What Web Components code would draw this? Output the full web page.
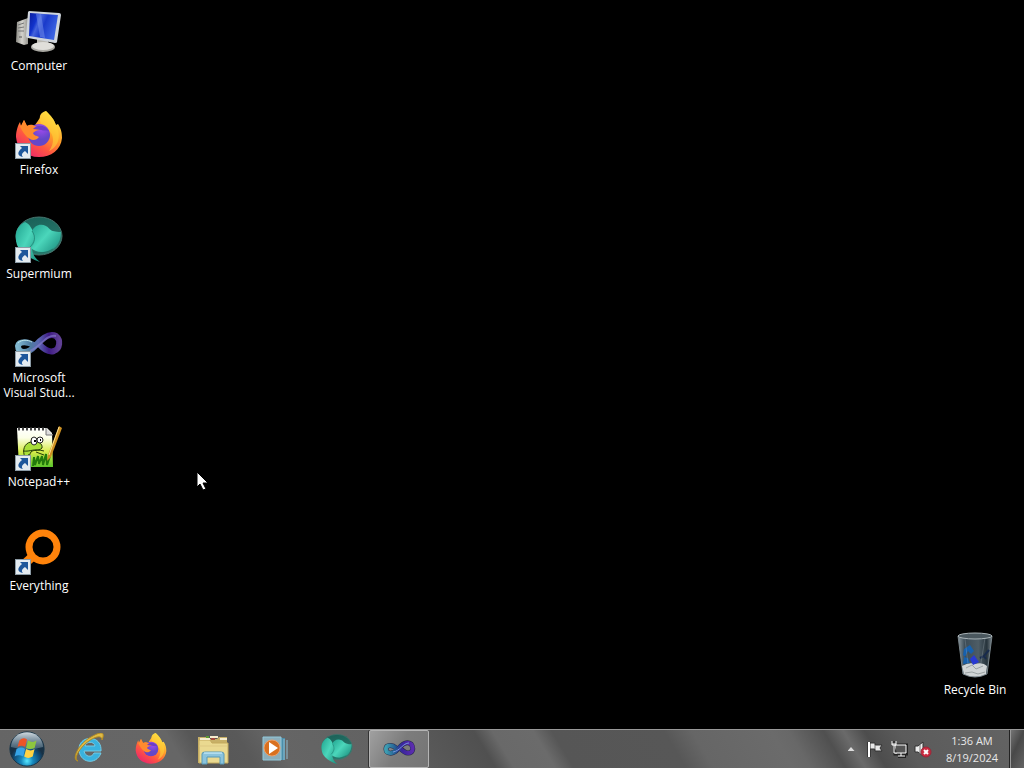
<!DOCTYPE html>
<html lang="en">
<head>
<meta charset="utf-8">
<title>Desktop</title>
<style>
html, body { height: 100%; margin: 0; background: #000; overflow: hidden; }
body { font: 12px/15px "Open Sans", "Noto Sans", sans-serif; color: #fff; }
</style>
</head>
<body>
<win-desktop></win-desktop>
<script>
const art = {
computer: `<svg viewBox="0 0 48 48"><defs><linearGradient id="s" x2="1" y2=".4"><stop stop-color="#0a1c9c"/><stop offset=".3" stop-color="#1233cc"/><stop offset=".4" stop-color="#4463dc"/><stop offset=".6" stop-color="#1a3aca"/><stop offset="1" stop-color="#3b63e2"/></linearGradient><linearGradient id="t" x2="1"><stop stop-color="#8b8a84"/><stop offset=".5" stop-color="#d5d4ce"/><stop offset="1" stop-color="#96958f"/></linearGradient></defs>
<path d="M2 15 13 11v26l-4 1-8-3z" fill="url(#t)"/><path d="M3 18l6-2M3 21l6-1M3 24h6" stroke="#777" /><path d="M4 30h3" stroke="#555"/><path d="M22 29l11 2v8H22z" fill="#bbb9b2"/><ellipse cx="28" cy="40" rx="12" ry="5" fill="#a9a8a2"/><ellipse cx="28" cy="39" rx="11" ry="4" fill="#e0dfda"/><path d="M14 4l30 2q2 0 2 2l-4 27q0 1-2 1L13 31q-2 0-2-2l2-24z" fill="#cfd5dc"/><path d="M15 6l28 2-4 25-25-4z" fill="url(#s)"/><path d="M21 7l5 0 4 24-5-1z" fill="#7995ee" opacity=".5"/></svg>`,
firefox: `<svg viewBox="0 0 48 48"><defs><linearGradient id="f" x1=".8" y1=".1" x2=".25" y2=".9"><stop stop-color="#ffe848"/><stop offset=".4" stop-color="#ff9c29"/><stop offset=".7" stop-color="#ff5940"/><stop offset="1" stop-color="#ef2f63"/></linearGradient><radialGradient id="p" cx=".6" cy=".2"><stop stop-color="#a34af0"/><stop offset="1" stop-color="#6347c8"/></radialGradient></defs>
<path d="M31 0c5 5 8 8 10 14l2-1c3 5 4 8 4 14C46 39 36 46 24 46 11 46 2 38 1 26 1 20 3 14 5 11l1 4 3-6 3 6c3-2 6-1 8 0 1-4 5-6 5-10 1-3 3-4 6-5z" fill="url(#f)"/><path d="M25 7c3-5 5-7 6-7 5 5 8 8 10 14 6 12 2 22-7 26 6-8 5-17-1-21-4-3-9-7-8-12z" fill="#ffd238" opacity=".6"/><circle cx="24" cy="24" r="11" fill="url(#p)"/><path d="M4 13l2 2 3-6 3 6c5-2 10 0 13 4-3 0-5 1-7 3 1 3 3 2 6 4-2 3-6 4-9 2-5-3-8-8-11-15z" fill="#ff8b2d"/><path d="M18 18c5-5 12-4 16 2-4-1-5 0-8-1z" fill="#6b3fc5"/></svg>`,
supermium: `<svg viewBox="0 0 48 48"><defs><linearGradient id="m" x2=".3" y2="1"><stop stop-color="#175f56"/><stop offset="1" stop-color="#2d7c6f"/></linearGradient><linearGradient id="l" x2="1" y2=".8"><stop stop-color="#1fa28e"/><stop offset=".5" stop-color="#4bd6bb"/><stop offset="1" stop-color="#1f9483"/></linearGradient></defs>
<ellipse cx="24" cy="21" rx="23" ry="19" fill="url(#m)" stroke="#46756e"/><path d="M10 7C1 11-1 21 2 30c3 7 11 13 23 17-6-5-8-9-8-14 4-4 5-8 2-14-2-5-4-10-9-12z" fill="url(#l)"/><path d="M17 16c2-5 8-8 14-5 4 2 3 6 15 6 0 12-7 20-19 20-5 0-9-2-11-4 5-5 5-11 1-17z" fill="url(#l)"/><path d="M17 16c4 6 3 11-2 16M18 37q10 3 20-3" fill="none" stroke="#176f62" opacity=".6"/></svg>`,
studio: `<svg viewBox="0 0 48 48"><defs><linearGradient id="v" x2="1"><stop stop-color="#80b7cf"/><stop offset=".3" stop-color="#4d7b9f"/><stop offset=".5" stop-color="#5c68b2"/><stop offset=".75" stop-color="#3e1a85"/><stop offset="1" stop-color="#604095"/></linearGradient></defs>
<path d="M19 27c-5-5-15-5-16 0 0 8 10 8 17 0 8-9 15-13 21-10 5 4 4 13-2 15-7 2-12-4-16-8" fill="none" stroke="url(#v)" stroke-width="6"/><path d="M3 24c4-4 10-3 14-1" fill="none" stroke="#bce3e8"/><path d="M15 32c11-4 16-17 26-15" fill="none" stroke="#8b80cf" stroke-width="2" opacity=".6"/></svg>`,
taskstudio: `<svg viewBox="0 0 34 32"><defs><linearGradient id="v" x2="1"><stop stop-color="#3f9fb2"/><stop offset=".35" stop-color="#245c93"/><stop offset=".6" stop-color="#39259d"/><stop offset="1" stop-color="#5b2cae"/></linearGradient></defs>
<path d="M14 15c-4-4-10-3-10 1 0 5 7 6 12 0 5-6 9-8 13-5 3 4 2 9-3 9-4 0-7-4-9-6" fill="none" stroke="#242846" stroke-width="5"/><path d="M14 15c-4-4-10-3-10 1 0 5 7 6 12 0 5-6 9-8 13-5 3 4 2 9-3 9-4 0-7-4-9-6" fill="none" stroke="url(#v)" stroke-width="4"/><path d="M11 19c7-1 10-9 16-9" fill="none" stroke="#7795dd"/></svg>`,
notepad: `<svg viewBox="0 0 48 48"><defs><linearGradient id="n" x2="0" y2="1"><stop stop-color="#fff"/><stop offset=".25" stop-color="#fcffe9"/><stop offset=".6" stop-color="#d8ed4c"/><stop offset="1" stop-color="#5bc52b"/></linearGradient></defs>
<path d="M2 5h30l5 5 1 34H4z" fill="url(#n)"/><path d="M3 6h28" stroke="#444" stroke-width="3" stroke-dasharray="2 2"/><path d="M31 5v7h7" fill="#ddd" stroke="#777"/><path d="M10 34c-3-6-1-14 6-15 7-2 12 2 11 6-4 4-8 1-11 4-2 3-1 5-5 6M8 28c8 1 10-3 21 0M14 31l-3 8M21 29l8 3" fill="#a9df39" stroke="#263b08"/><ellipse cx="19" cy="18" rx="3" ry="4" fill="#fff" stroke="#222"/><ellipse cx="25" cy="17" rx="3" ry="3" fill="#fff" stroke="#222"/><path d="M19 18h2M25 17h1" stroke="#000" stroke-width="2"/><path d="M18 43l1-9 1 8 3-9 1 8 3-8 1 9 3-11 1 11 3-9" fill="none" stroke="#227a0b" stroke-width="2"/><path d="M44 3l3 2-11 29-4 4 1-6z" fill="#ce9122"/><path d="M44 4L34 32" stroke="#ffe392"/></svg>`,
search: `<svg viewBox="0 0 48 48"><circle cx="28" cy="20" r="14" fill="none" stroke="#ff830b" stroke-width="7"/><path d="M17 30L5 41" stroke="#ff830b" stroke-width="9"/></svg>`,
bin: `<svg viewBox="0 0 48 48"><defs><linearGradient id="b" x2="1"><stop stop-color="#8c989e"/><stop offset=".2" stop-color="#3b4b56"/><stop offset=".6" stop-color="#4e5d66"/><stop offset=".85" stop-color="#27343c"/><stop offset="1" stop-color="#7c878d"/></linearGradient></defs>
<path d="M7 5q17-4 34 0l-5 38q-12 6-24 0z" fill="url(#b)" stroke="#78848a"/><ellipse cx="24" cy="5" rx="17" ry="3" fill="#4b585f" stroke="#a9b3b7"/><path d="M11 35q7-4 13-2 8-2 12 2l-1 8q-11 5-22 0z" fill="#d0d4d5"/><path d="M15 37l6-3 4 4 7-3M14 42l7-1 6 2 7-2" stroke="#9ba2a3" fill="none"/><path d="M13 18l6-4 4 6-3 3-3-3-3 6-2-2zM13 26l4 1 2 5-7 1z" fill="#1660ad"/><path d="M19 28l4-4 5 7-6 3z" fill="#293ad2"/><path d="M29 27l4-2 5-6M33 25l2 3" fill="none" stroke="#182b4c" stroke-width="2"/><path d="M14 8l3 25M34 7l-5 31" stroke="#b6c2c9" opacity=".25"/></svg>`,
start: `<svg viewBox="0 0 40 40"><defs><radialGradient id="o" cy=".85"><stop stop-color="#58e8ff"/><stop offset=".35" stop-color="#1688bd"/><stop offset=".75" stop-color="#114e79"/><stop offset="1" stop-color="#173044"/></radialGradient><linearGradient id="g" x2="0" y2="1"><stop stop-color="#d1dae0"/><stop offset="1" stop-color="#668497" stop-opacity=".5"/></linearGradient></defs>
<circle cx="20" cy="20" r="18" fill="url(#o)" stroke="#153448"/><path d="M3 18C4-3 36-3 37 18q-17 5-34 0z" fill="url(#g)"/><path d="M12 11q4-4 8-1l-2 8q-4-3-8 0z" fill="#ed5427"/><path d="M21 11q5 3 9 0l-2 8q-5 2-9 0z" fill="#8dc63f"/><path d="M9 20q5-3 9 0l-2 8q-5-3-9 0z" fill="#36a4e7"/><path d="M19 20q5 3 9 0l-2 8q-5 3-9 0z" fill="#ffd343"/></svg>`,
ie: `<svg viewBox="0 0 32 32"><path d="M28 18H11c1 6 8 7 10 2h7c-5 13-22 10-22-4C6 2 29 1 28 18zM12 13h10c-1-5-9-5-10 0z" fill="#39b2df" stroke="#75cce6"/><path d="M5 28C-2 27 5 11 18 4c12-7 14-4 11 3 0-6-9-3-17 4C4 19 1 26 5 28z" fill="#dfbb46" stroke="#b38b22"/></svg>`,
folder: `<svg viewBox="0 0 34 32"><path d="M2 4h9l2 2h8l2-2h8v26H2z" fill="#c7b067"/><path d="M3 7h11l2 3h16v20H3z" fill="#ead990" stroke="#c3aa5f"/><path d="M4 6h10M14 4h8M24 6h7" stroke="#f6edcf" stroke-width="2"/><path d="M10 4h3" stroke="#5a9c35" stroke-width="2"/><path d="M15 6h4" stroke="#a54b3c" stroke-width="2"/><path d="M3 13h28" stroke="#dec983"/><path d="M6 31V21q0-2 3-2h16q3 0 3 2v10h-4v-7H11v7z" fill="#8ac3dc" stroke="#5799b8"/><path d="M8 20h18" stroke="#d7f6ff"/></svg>`,
media: `<svg viewBox="0 0 32 32"><path d="M7 5h19v22H7z" fill="#4b8da9"/><path d="M25 6v21M28 7v19" stroke="#91bdd0"/><path d="M4 4h18v23H4z" fill="#8caebb" stroke="#91c9dc"/><circle cx="13" cy="15" r="8" fill="#d9701f" stroke="#eba16b"/><path d="M10 9l9 6-9 6z" fill="#fff"/></svg>`,
flag: `<svg viewBox="0 0 18 18"><path d="M3 2v15" stroke="#1b1b1b" stroke-width="3"/><path d="M4 3h5v2h7l-2 3 2 3H9V9H4z" fill="#e8e8e8" stroke="#333"/><path d="M2 2h2v15H2z" fill="#fff"/><path d="M9 5v4" stroke="#777"/></svg>`,
network: `<svg viewBox="0 0 18 18"><path d="M5 5h12v9H5zM8 17h8M12 14v3" fill="#575757" stroke="#222" stroke-width="3"/><path d="M5 5h11v8H5zM8 16h7M11 13v3" fill="#555" stroke="#fff"/><path d="M2 1v4h4V1M4 5v8h3M2 4h4" fill="#333" stroke="#fff"/></svg>`,
volume: `<svg viewBox="0 0 18 18"><path d="M1 6h3l5-4v14l-5-4H1z" fill="#eee" stroke="#333"/><path d="M6 5v9" stroke="#777"/><circle cx="12" cy="12" r="5" fill="#cb2b40" stroke="#9c2638"/><path d="M10 10l4 4m0-4l-4 4" stroke="#fff" stroke-width="2"/></svg>`
};
const link = `<svg class="badge" viewBox="0 0 16 16" aria-hidden="true"><path d="M0 0h16v16H0z" fill="#8c9ba5"/><path d="M1 1h14v14H1z" fill="#e4ebf0"/><path d="M5 3h8v8l-3-3c-3 2-4 4-2 6-6-1-6-5-1-9z" fill="#1e579b"/></svg>`;

customElements.define('sys-icon', class extends HTMLElement {
  connectedCallback() {
    this.attachShadow({mode: 'open'}).innerHTML = `<style>:host{display:block}svg{display:block;width:100%;height:100%}</style>${art[this.getAttribute('name')]}`;
  }
});
customElements.define('desktop-icon', class extends HTMLElement {
  connectedCallback() {
    this.attachShadow({mode: 'open'}).innerHTML = `<style>
      :host{display:block;width:78px;height:104px}
      button{display:flex;flex-direction:column;align-items:center;gap:3px;width:100%;padding:7px 0 0;border:0;background:none;color:#fff;font:inherit;text-align:center;text-shadow:0 1px 2px #000}
      .pic{position:relative;width:48px;height:48px}
      sys-icon{width:48px;height:48px}
      .badge{position:absolute;left:0;bottom:0;width:16px;height:16px}
      span{white-space:nowrap}
      </style><button type="button"><div class="pic"><sys-icon name="${this.getAttribute('icon')}"></sys-icon>${this.hasAttribute('shortcut') ? link : ''}</div><span><slot></slot></span></button>`;
  }
});
customElements.define('task-button', class extends HTMLElement {
  connectedCallback() {
    this.attachShadow({mode: 'open'}).innerHTML = `<style>
      :host{display:block;width:60px}
      button{box-sizing:border-box;display:flex;align-items:center;justify-content:center;width:100%;height:100%;padding:0;border:1px solid transparent;background:none;border-radius:2px}
      sys-icon{width:34px;height:32px}
      :host([active]) button{border-color:#b4b4b4;background:linear-gradient(120deg,#a0a0a0,#7c7c7c 50%,#757575);box-shadow:-1px 0 0 #333}
      :host([orb]){width:54px}
      :host([orb]) sys-icon{width:40px;height:38px}
      </style><button type="button" aria-label="${this.getAttribute('label')}"><sys-icon name="${this.getAttribute('icon')}"></sys-icon></button>`;
  }
});
customElements.define('system-tray', class extends HTMLElement {
  connectedCallback() {
    this.attachShadow({mode: 'open'}).innerHTML = `<style>
      :host{display:flex;align-items:stretch}
      button{display:flex;align-items:center;justify-content:center;border:0;padding:0;background:none;color:#e8e8e8;font:inherit}
      .tool{width:24px}
      sys-icon{width:18px;height:18px}
      .up{width:7px;height:4px;background:#ddd;clip-path:polygon(50% 0,100% 100%,0 100%)}
      .clock{width:74px;flex-direction:column;font-size:11px;line-height:17px}
      .peek{width:15px;border-left:1px solid #222;box-shadow:1px 0 0 #999 inset;background:linear-gradient(115deg,#777,#484848 45%,#646464)}
      </style>
      <button class="tool" aria-label="Show hidden icons"><i class="up"></i></button>
      <button class="tool" aria-label="Action Center"><sys-icon name="flag"></sys-icon></button>
      <button class="tool" aria-label="Network"><sys-icon name="network"></sys-icon></button>
      <button class="tool" aria-label="Volume"><sys-icon name="volume"></sys-icon></button>
      <button class="clock"><span>1:36 AM</span><span>8/19/2024</span></button>
      <button class="peek" aria-label="Show desktop"></button>`;
  }
});
customElements.define('task-bar', class extends HTMLElement {
  connectedCallback() {
    this.attachShadow({mode: 'open'}).innerHTML = `<style>
      :host{box-sizing:border-box;display:flex;height:39px;border-top:1px solid #999;background:linear-gradient(59deg,#656565,#666 160px,#575757 180px,#595959 220px,#656565 250px,#626262 340px,#585858 380px,#505050 425px,#696969 441px,#6b6b6b 476px,#565656 492px,#575757 588px,#666 612px,#6b6b6b 680px,#686868 695px,#505050 725px,#6a6a6a 742px,#4d4d4d 760px,#5b5b5b 790px,#646464)}
      nav{display:flex;gap:2px;flex:1}
      task-button[orb]{margin-right:3px}
      </style><nav aria-label="Taskbar">
      <task-button orb icon="start" label="Start"></task-button>
      <task-button icon="ie" label="Internet Explorer"></task-button>
      <task-button icon="firefox" label="Firefox"></task-button>
      <task-button icon="folder" label="Windows Explorer"></task-button>
      <task-button icon="media" label="Windows Media Player"></task-button>
      <task-button icon="supermium" label="Supermium"></task-button>
      <task-button active icon="taskstudio" label="Microsoft Visual Studio"></task-button>
      </nav><system-tray></system-tray>`;
  }
});
customElements.define('win-desktop', class extends HTMLElement {
  connectedCallback() {
    this.attachShadow({mode: 'open'}).innerHTML = `<style>
      :host{display:flex;flex-direction:column;height:100%}
      main{flex:1;display:flex;justify-content:space-between;padding-bottom:1px;min-height:0}
      .icons{display:flex;flex-direction:column}
      .bin{align-self:flex-end;margin-right:10px}
      .cursor{position:absolute;left:196px;top:471px;width:13px;height:20px}
      </style>
      <main><div class="icons">
      <desktop-icon icon="computer">Computer</desktop-icon>
      <desktop-icon icon="firefox" shortcut>Firefox</desktop-icon>
      <desktop-icon icon="supermium" shortcut>Supermium</desktop-icon>
      <desktop-icon icon="studio" shortcut>Microsoft<br>Visual Stud...</desktop-icon>
      <desktop-icon icon="notepad" shortcut>Notepad++</desktop-icon>
      <desktop-icon icon="search" shortcut>Everything</desktop-icon>
      </div><desktop-icon class="bin" icon="bin">Recycle Bin</desktop-icon></main>
      <task-bar></task-bar>
      <svg class="cursor" viewBox="0 0 13 20" aria-hidden="true"><path d="M1 1v15l3-3 3 6 3-1-3-6h5z" fill="#fff" stroke="#000"/></svg>`;
  }
});
</script>
</body>
</html>
